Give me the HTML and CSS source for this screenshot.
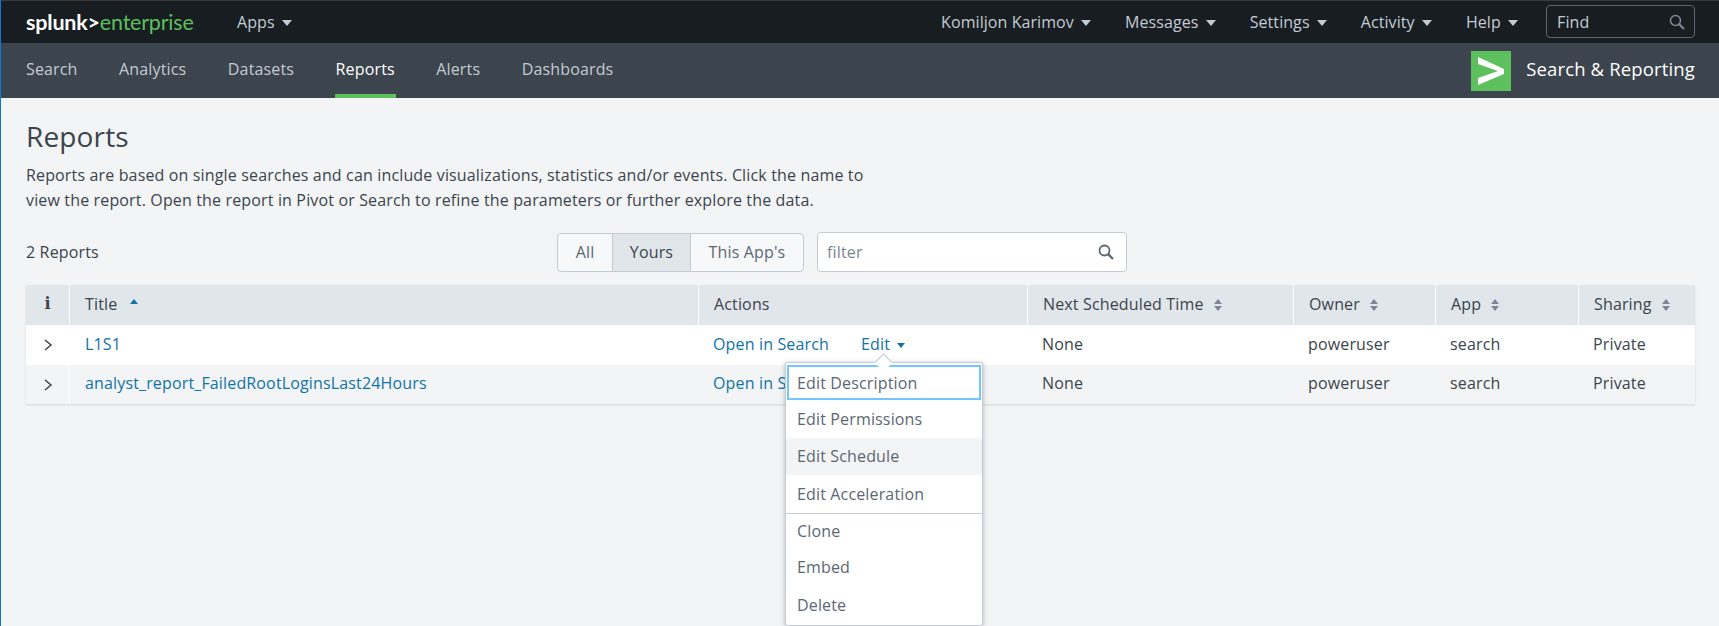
FILE: index.html
```html
<!DOCTYPE html>
<html lang="en">
<head>
  <meta charset="UTF-8" />
  <title>Reports | Splunk</title>
  <link rel="stylesheet" href="styles.css">
</head>
<body>
  <header class="topbar">
    <a class="logo" href="#"><b>splunk&gt;</b><span>enterprise</span></a>
    <a class="topbar-link apps" href="#">Apps <i class="caret"></i></a>
    <nav class="topbar-right">
      <a class="topbar-link" href="#">Komiljon Karimov <i class="caret"></i></a>
      <a class="topbar-link" href="#">Messages <i class="caret"></i></a>
      <a class="topbar-link" href="#">Settings <i class="caret"></i></a>
      <a class="topbar-link" href="#">Activity <i class="caret"></i></a>
      <a class="topbar-link" href="#">Help <i class="caret"></i></a>
      <div class="find">
        <span>Find</span>
        <svg width="16" height="16" viewBox="0 0 16 16" fill="none" stroke="#7b8794" stroke-width="1.6"><circle cx="6.5" cy="6.5" r="5"/><path d="M10.2 10.2 15 15" stroke-width="2.2"/></svg>
      </div>
    </nav>
  </header>

  <div class="appbar">
    <nav class="appnav">
      <a href="#">Search</a>
      <a href="#">Analytics</a>
      <a href="#">Datasets</a>
      <a href="#" class="active">Reports</a>
      <a href="#">Alerts</a>
      <a href="#">Dashboards</a>
    </nav>
    <div class="appname">
      <span class="appicon">
        <svg width="40" height="40" viewBox="0 0 40 40"><path d="M7 6 33 18v5L7 34v-7l20-7-20-7z" fill="#fff"/></svg>
      </span>
      <span class="appname-text">Search &amp; Reporting</span>
    </div>
  </div>

  <main class="content">
    <h1>Reports</h1>
    <p class="intro">Reports are based on single searches and can include visualizations, statistics and/or events. Click the name to view the report. Open the report in Pivot or Search to refine the parameters or further explore the data.</p>

    <div class="toolbar">
      <div class="count">2 Reports</div>
      <div class="btn-group">
        <button class="btn-all">All</button>
        <button class="btn-yours selected">Yours</button>
        <button class="btn-app">This App's</button>
      </div>
      <div class="filter">
        <span>filter</span>
        <svg width="16" height="16" viewBox="0 0 16 16" fill="none" stroke="#5c6773" stroke-width="1.8"><circle cx="6.5" cy="6.5" r="5"/><path d="M10.200 10.200 15 15" stroke-width="2.400"/></svg>
      </div>
    </div>

    <table class="reports">
      <colgroup>
        <col class="c-info"><col class="c-title"><col class="c-actions"><col class="c-next"><col class="c-owner"><col class="c-app"><col class="c-sharing">
      </colgroup>
      <thead>
        <tr>
          <th class="info">i</th>
          <th>Title <i class="sort-up"></i></th>
          <th>Actions</th>
          <th>Next Scheduled Time <i class="sort"></i></th>
          <th>Owner <i class="sort"></i></th>
          <th>App <i class="sort"></i></th>
          <th>Sharing <i class="sort"></i></th>
        </tr>
      </thead>
      <tbody>
        <tr>
          <td class="expand"><svg width="10" height="12" viewBox="0 0 10 12" fill="none" stroke="#3c444d" stroke-width="1.500"><path d="M2 1l6 5-6 5"/></svg></td>
          <td><a href="#">L1S1</a></td>
          <td><a href="#" class="open-link">Open in Search</a><a href="#">Edit <i class="caret blue"></i></a></td>
          <td>None</td>
          <td>poweruser</td>
          <td>search</td>
          <td>Private</td>
        </tr>
        <tr class="alt">
          <td class="expand"><svg width="10" height="12" viewBox="0 0 10 12" fill="none" stroke="#3c444d" stroke-width="1.500"><path d="M2 1l6 5-6 5"/></svg></td>
          <td><a href="#">analyst_report_FailedRootLoginsLast24Hours</a></td>
          <td><a href="#" class="open-link">Open in S</a></td>
          <td>None</td>
          <td>poweruser</td>
          <td>search</td>
          <td>Private</td>
        </tr>
      </tbody>
    </table>

    <div class="menu">
      <i class="menu-arrow"></i>
      <a href="#" class="focused">Edit Description</a>
      <a href="#">Edit Permissions</a>
      <a href="#" class="hover">Edit Schedule</a>
      <a href="#">Edit Acceleration</a>
      <hr>
      <a href="#">Clone</a>
      <a href="#">Embed</a>
      <a href="#">Delete</a>
    </div>
  </main>
</body>
</html>
```
FILE: styles.css
```css
html, body {
  margin: 0;
  height: 626px;
  overflow: hidden;
}
body {
  font-family: "Open Sans", Lato, sans-serif;
  font-size: 16px;
  letter-spacing: 0.15px;
  color: #3c444d;
  background: #f2f4f5;
  border-left: 1px solid #0a78d4;
}
a {
  text-decoration: none;
  color: #1073a8;
}

/* top bar */
.topbar {
  display: flex;
  align-items: center;
  height: 41px;
  background: #171d21;
  border-top: 1px solid #3a3a3a;
  padding: 0 24px 1px 25px;
}
.logo {
  font-family: Lato, sans-serif;
  font-size: 21.500px;
  letter-spacing: -0.2px;
  color: #fff;
  width: 211px;
}
.logo b {
  color: #fff;
}
.logo span {
  color: #5cc05c;
}
.topbar-link {
  color: #c3cbd4;
  letter-spacing: 0.07px;
  white-space: nowrap;
}
.topbar-right {
  margin-left: auto;
  display: flex;
  align-items: center;
  gap: 34px;
}
.caret {
  display: inline-block;
  vertical-align: middle;
  margin-left: 3px;
  border-left: 5px solid transparent;
  border-right: 5px solid transparent;
  border-top: 6px solid #c3cbd4;
}
.caret.blue {
  border-left-width: 4.500px;
  border-right-width: 4.500px;
  border-top: 5px solid #1073a8;
}
.find {
  display: flex;
  align-items: center;
  justify-content: space-between;
  box-sizing: border-box;
  width: 149px;
  height: 33px;
  margin-left: -6px;
  padding: 0 9px 0 10px;
  color: #c3cbd4;
  border: 1px solid #5c6773;
  border-radius: 4px;
}

/* app bar */
.appbar {
  display: flex;
  align-items: center;
  justify-content: space-between;
  height: 55px;
  background: #3c444d;
  padding: 0 24px 0 25px;
}
.appnav {
  display: flex;
  align-self: stretch;
  gap: 41.500px;
}
.appnav a {
  display: flex;
  align-items: center;
  box-sizing: border-box;
  color: #c3cbd4;
  border-bottom: 4px solid transparent;
}
.appnav a.active {
  margin: 0 -1px;
  padding: 0 1px;
  color: #fff;
  border-bottom-color: #5cc05c;
}
.appname {
  display: flex;
  align-items: center;
  gap: 15px;
  color: #fff;
  font-size: 18.500px;
}
.appname-text {
  margin-bottom: 4px;
}
.appicon {
  display: block;
  width: 40px;
  height: 40px;
  background: #5cc05c;
}
.appicon svg {
  display: block;
}

/* page */
.content {
  position: relative;
  padding: 0 24px 0 25px;
}
h1 {
  margin: 0;
  padding-top: 21px;
  font-size: 28px;
  font-weight: 500;
  line-height: 34px;
}
.intro {
  margin: 10px 0 0;
  width: 860px;
  line-height: 25px;
}
.toolbar {
  display: flex;
  align-items: center;
  height: 40px;
  margin-top: 19px;
}
.count {
  width: 531px;
}
.btn-group {
  display: flex;
  height: 39px;
  box-sizing: border-box;
  border: 1px solid #c3cbd4;
  border-radius: 4px;
  background: #f7f8fa;
  overflow: hidden;
}
.btn-group button {
  font: inherit;
  letter-spacing: inherit;
  color: #5c6773;
  background: none;
  border: 0;
  padding: 0;
}
.btn-all { width: 54px; }
.btn-yours { width: 79px; }
.btn-app { width: 112px; }
.btn-group .selected {
  color: #3c444d;
  background: #e1e6eb;
  border-left: 1px solid #c3cbd4;
  border-right: 1px solid #c3cbd4;
}
.filter {
  display: flex;
  align-items: center;
  justify-content: space-between;
  box-sizing: border-box;
  width: 310px;
  height: 40px;
  margin-left: 13px;
  padding: 0 12px 0 9px;
  color: #7b8794;
  background: #fff;
  border: 1px solid #c3cbd4;
  border-radius: 4px;
}

/* table */
.reports {
  width: 1669px;
  margin-top: 13px;
  table-layout: fixed;
  border-collapse: separate;
  border-spacing: 0;
  box-shadow: 0 1px 2px rgba(0, 0, 0, 0.12);
}
.c-info { width: 43px; }
.c-title { width: 629px; }
.c-actions { width: 329px; }
.c-next { width: 266px; }
.c-owner { width: 142px; }
.c-app { width: 143px; }
.c-sharing { width: 117px; }
.reports th {
  height: 40px;
  padding: 0 0 3px 15px;
  text-align: left;
  font-weight: 400;
  background: #e1e6eb;
  border-left: 1px solid #fff;
  box-sizing: border-box;
}
.reports th:first-child {
  border-left: 0;
}
.reports th.info {
  padding: 0 0 3px;
  text-align: center;
  font: bold 16px "DejaVu Serif", serif;
}
.reports td {
  height: 39.500px;
  padding: 0 0 2px 15px;
  box-sizing: border-box;
  background: #fff;
}
.reports .alt td {
  background: #f2f4f5;
}
.reports td:nth-child(2) {
  border-left: 1px solid #fff;
}
.reports td.expand {
  padding: 0 0 2px;
  text-align: center;
}
.expand svg {
  display: inline-block;
  vertical-align: middle;
}
.open-link {
  margin-right: 32px;
}
.sort, .sort-up {
  position: relative;
  display: inline-block;
  width: 8px;
  height: 12px;
  margin-left: 6px;
  vertical-align: -1px;
}
.sort-up {
  margin-left: 8px;
}
.sort::before, .sort::after, .sort-up::before {
  content: "";
  position: absolute;
  left: 0;
  border-left: 4px solid transparent;
  border-right: 4px solid transparent;
}
.sort::before, .sort-up::before {
  top: 0;
  border-bottom: 5px solid #7b8794;
}
.sort-up::before {
  border-bottom-color: #1073a8;
}
.sort::after {
  bottom: 0;
  border-top: 5px solid #7b8794;
}

/* edit dropdown */
.menu {
  position: absolute;
  left: 784px;
  top: 264px;
  width: 198px;
  box-sizing: border-box;
  padding: 2px 1px 1px;
  background: #fff;
  border: 1px solid #c3cbd4;
  border-radius: 2px;
  box-shadow: 0 1px 5px rgba(0, 0, 0, 0.25);
}
.menu a {
  display: flex;
  align-items: center;
  height: 35px;
  padding: 0 10px;
  color: #5c6773;
}
.menu a + a {
  height: 37.500px;
  margin: 0 -1px;
  padding-left: 11px;
}
.menu a.focused {
  box-sizing: border-box;
  height: 35px;
  box-shadow: 0 0 0 2px #73c5ff inset;
}
.menu a.hover {
  background: #f2f4f5;
}
.menu hr {
  margin: 0 -1px;
  border: 0;
  border-top: 1px solid #c3cbd4;
}
.menu-arrow {
  position: absolute;
  left: 91px;
  top: -7px;
  width: 12px;
  height: 12px;
  background: #fff;
  border-left: 1px solid #c3cbd4;
  border-top: 1px solid #c3cbd4;
  transform: rotate(45deg);
}
```
